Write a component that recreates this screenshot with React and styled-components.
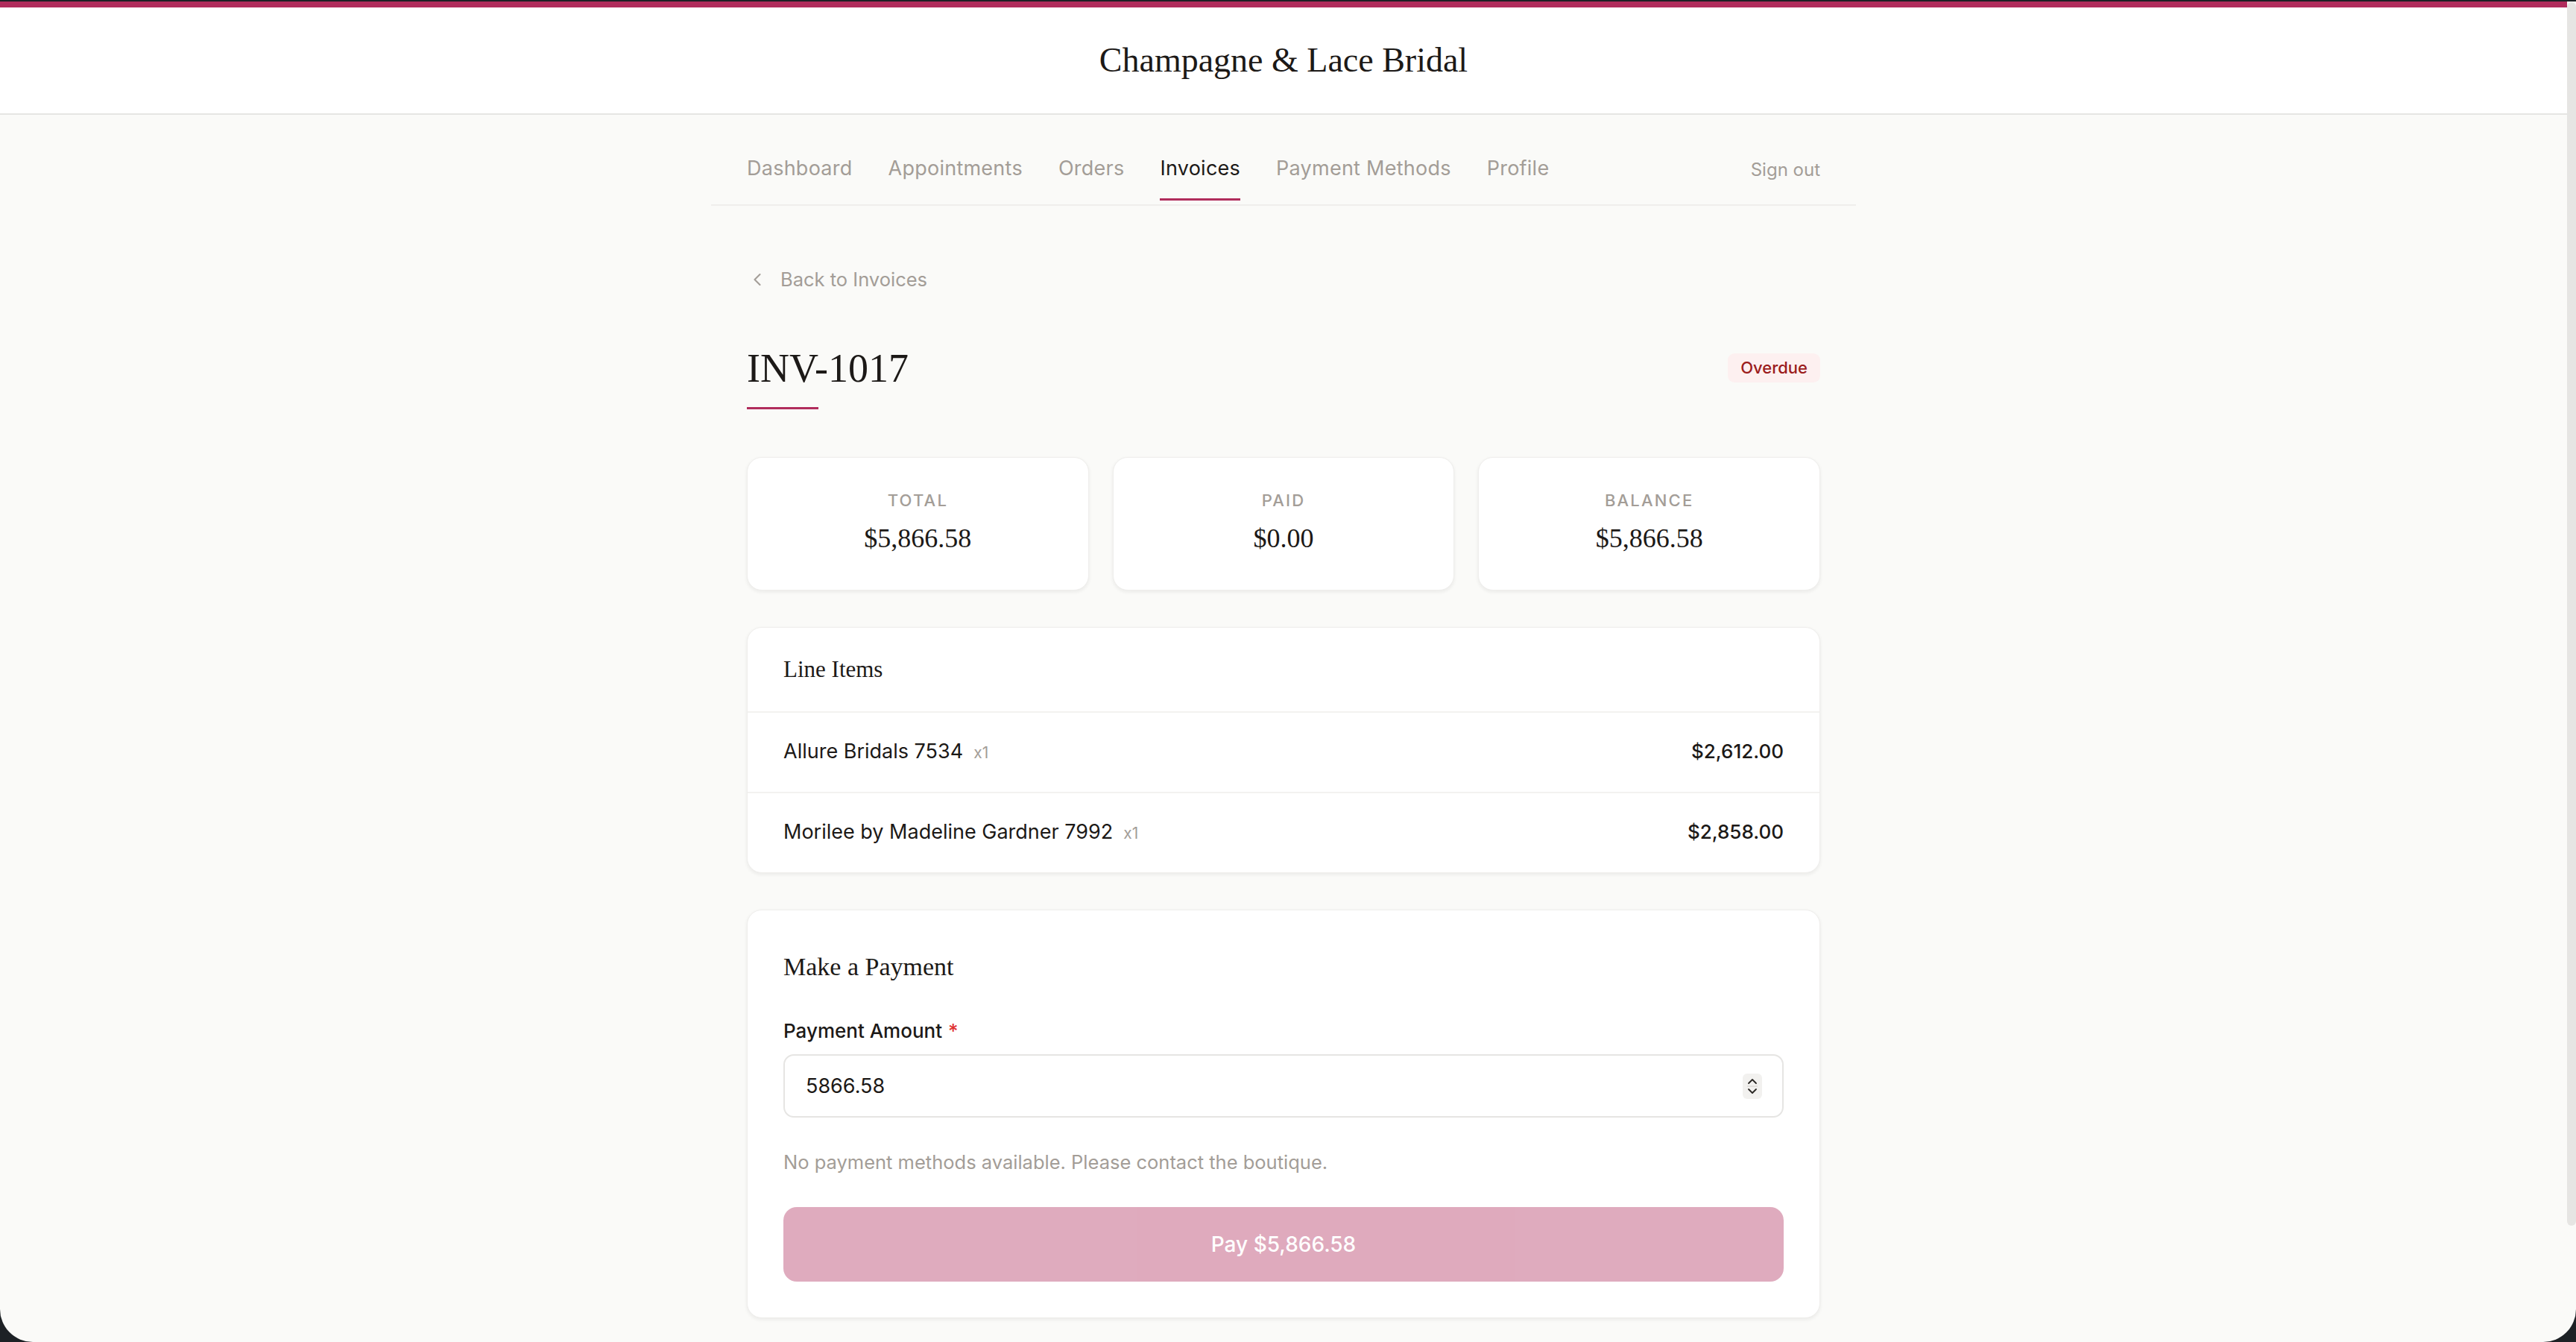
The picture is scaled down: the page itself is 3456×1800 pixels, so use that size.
import styled, { createGlobalStyle } from 'styled-components';
import { ChevronLeft } from 'lucide-react';

const GlobalStyle = createGlobalStyle`
  html, body {
    margin: 0;
    padding: 0;
    background: #1d2125;
    overflow: hidden;
  }
  * { box-sizing: border-box; }
`;

const serif = `"Liberation Serif", "Times New Roman", serif`;
const sans = `Inter, "Liberation Sans", Arial, sans-serif`;
const crimson = '#b02c5c';
const muted = '#a39d97';

const Window = styled.div`
  margin-top: 2px;
  height: 1798px;
  background: #fafaf8;
  border-radius: 0 0 44px 44px;
  overflow: hidden;
  display: flex;
  font-family: ${sans};
  color: #1c1917;
`;

const Page = styled.div`
  flex: 1;
  min-width: 0;
  overflow: hidden;
`;

const ScrollRail = styled.div`
  width: 12px;
  flex-shrink: 0;
  padding-top: 1px;
`;

const ScrollThumb = styled.div`
  height: 1641px;
  border-radius: 6px;
  background: #e6e5e3;
`;

const Header = styled.header`
  height: 152px;
  background: #fff;
  border-top: 8px solid ${crimson};
  border-bottom: 2px solid #e6e5e3;
  display: flex;
  align-items: center;
  justify-content: center;
`;

const Brand = styled.h1`
  margin: 0;
  font-family: ${serif};
  font-weight: 400;
  font-size: 46px;
  line-height: 56px;
  color: #1c1917;
`;

const Nav = styled.nav`
  max-width: 1536px;
  margin: 0 auto;
  padding: 0 48px 5px;
  border-bottom: 2px solid #efeeec;
  display: flex;
  justify-content: space-between;
  align-items: flex-start;
`;

const NavLinks = styled.div`
  display: flex;
  gap: 48px;
`;

const NavLink = styled.a`
  padding: 52px 0 20px;
  font-size: 27px;
  line-height: 40px;
  letter-spacing: 0.25px;
  color: ${p => (p.$active ? '#1c1917' : muted)};
  border-bottom: 3px solid ${p => (p.$active ? crimson : 'transparent')};
  text-decoration: none;
  cursor: pointer;
`;

const SignOut = styled.button`
  padding: 54px 0 0;
  border: 0;
  background: none;
  font-family: ${sans};
  font-size: 24px;
  line-height: 40px;
  color: ${muted};
  cursor: pointer;
`;

const Main = styled.main`
  max-width: 1536px;
  margin: 0 auto;
  padding: 79px 48px 200px;
`;

const BackLink = styled.a`
  display: flex;
  align-items: center;
  gap: 17px;
  font-size: 25.5px;
  line-height: 40px;
  color: ${muted};
  cursor: pointer;
`;

const TitleRow = styled.div`
  margin: 67px 0 64px;
  display: flex;
  justify-content: space-between;
  align-items: flex-start;
`;

const Title = styled.h2`
  margin: 0;
  font-family: ${serif};
  font-weight: 400;
  font-size: 54px;
  line-height: 64px;
  color: #1c1917;

  &::after {
    content: '';
    display: block;
    width: 96px;
    height: 3px;
    margin-top: 20px;
    background: ${crimson};
  }
`;

const Badge = styled.span`
  margin-top: 12px;
  height: 39px;
  padding: 0 17px;
  border-radius: 9px;
  background: #fdf0f0;
  color: #9b1c1c;
  font-size: 22px;
  font-weight: 500;
  line-height: 39px;
`;

const Card = styled.section`
  background: #fff;
  border: 1px solid #efeeec;
  border-radius: 20px;
  box-shadow: 0 2px 5px rgba(28, 25, 23, 0.07);
  margin-bottom: ${p => p.$gap || '49px'};
`;

const StatGrid = styled.div`
  display: grid;
  grid-template-columns: repeat(3, 1fr);
  gap: 32px;
  margin-bottom: 49px;
`;

const StatCard = styled(Card)`
  margin: 0;
  padding: 41px 32px 45px;
  text-align: center;
`;

const StatLabel = styled.div`
  font-size: 22px;
  line-height: 32px;
  font-weight: 500;
  letter-spacing: 0.1em;
  color: ${muted};
`;

const StatValue = styled.div`
  margin-top: 11px;
  font-family: ${serif};
  font-size: 36px;
  line-height: 48px;
`;

const CardHeader = styled.div`
  padding: 40px 48px;
  border-bottom: 2px solid #f3f2f0;
  font-family: ${serif};
  font-size: 31px;
  line-height: 32px;
`;

const ItemRow = styled.div`
  display: flex;
  justify-content: space-between;
  align-items: baseline;
  padding: 32px 48px;
  font-size: 27px;
  line-height: 40px;
  &:not(:last-child) { border-bottom: 2px solid #f3f2f0; }
`;

const ItemName = styled.span`
  display: flex;
  align-items: baseline;
  gap: 14px;
`;

const Qty = styled.span`
  font-size: 21px;
  color: ${muted};
`;

const Price = styled.span`
  font-size: 26px;
  font-weight: 500;
`;

const PaymentCard = styled(Card)`
  padding: 48px;
`;

const PaymentTitle = styled.h3`
  margin: 0;
  font-family: ${serif};
  font-weight: 400;
  font-size: 34px;
  line-height: 56px;
`;

const Label = styled.label`
  display: block;
  margin-top: 40px;
  margin-bottom: 13px;
  font-size: 26px;
  line-height: 36px;
  font-weight: 500;

  & span { color: #e03131; margin-left: 8px; }
`;

const InputBox = styled.div`
  height: 85px;
  border: 2px solid #e6e5e3;
  border-radius: 14px;
  padding: 0 27px 0 28px;
  display: flex;
  align-items: center;
  background: #fff;
`;

const Input = styled.input`
  flex: 1;
  border: 0;
  outline: none;
  background: transparent;
  padding: 0;
  font-family: ${sans};
  font-size: 27px;
  color: #1c1917;
`;

const Help = styled.p`
  margin: 40px 0;
  font-size: 25.5px;
  line-height: 40px;
  color: ${muted};
`;

const PayButton = styled.button`
  width: 100%;
  height: 100px;
  border: 0;
  border-radius: 18px;
  background: ${crimson};
  opacity: 0.4;
  color: #fff;
  font-family: ${sans};
  font-size: 28px;
  font-weight: 500;
  cursor: not-allowed;
`;

const Stepper = () => (
  <svg width="26" height="34" viewBox="0 0 26 34" fill="none">
    <rect width="26" height="34" rx="6" fill="#f2f1ef" />
    <path d="M8 13l5-5 5 5" stroke="#2b2825" strokeWidth="1.8" strokeLinecap="round" strokeLinejoin="round" />
    <path d="M6 17h14" stroke="#dcdad7" strokeWidth="1.5" />
    <path d="M8 21l5 5 5-5" stroke="#2b2825" strokeWidth="1.8" strokeLinecap="round" strokeLinejoin="round" />
  </svg>
);

const links = ['Dashboard', 'Appointments', 'Orders', 'Invoices', 'Payment Methods', 'Profile'];

const stats = [
  { label: 'TOTAL', value: '$5,866.58' },
  { label: 'PAID', value: '$0.00' },
  { label: 'BALANCE', value: '$5,866.58' },
];

const items = [
  { name: 'Allure Bridals 7534', qty: 1, price: '$2,612.00' },
  { name: 'Morilee by Madeline Gardner 7992', qty: 1, price: '$2,858.00' },
];

export default function App() {
  return (
    <>
      <GlobalStyle />
      <Window>
        <Page>
          <Header>
            <Brand>Champagne &amp; Lace Bridal</Brand>
          </Header>
          <Nav>
            <NavLinks>
              {links.map(l => (
                <NavLink key={l} $active={l === 'Invoices'}>{l}</NavLink>
              ))}
            </NavLinks>
            <SignOut>Sign out</SignOut>
          </Nav>
          <Main>
            <BackLink>
              <ChevronLeft size={28} strokeWidth={1.75} />
              Back to Invoices
            </BackLink>
            <TitleRow>
              <Title>INV-1017</Title>
              <Badge>Overdue</Badge>
            </TitleRow>
            <StatGrid>
              {stats.map(s => (
                <StatCard key={s.label}>
                  <StatLabel>{s.label}</StatLabel>
                  <StatValue>{s.value}</StatValue>
                </StatCard>
              ))}
            </StatGrid>
            <Card>
              <CardHeader>Line Items</CardHeader>
              {items.map(it => (
                <ItemRow key={it.name}>
                  <ItemName>
                    {it.name}
                    <Qty>x{it.qty}</Qty>
                  </ItemName>
                  <Price>{it.price}</Price>
                </ItemRow>
              ))}
            </Card>
            <PaymentCard $gap="0">
              <PaymentTitle>Make a Payment</PaymentTitle>
              <Label>Payment Amount<span>*</span></Label>
              <InputBox>
                <Input type="text" defaultValue="5866.58" />
                <Stepper />
              </InputBox>
              <Help>No payment methods available. Please contact the boutique.</Help>
              <PayButton disabled>Pay $5,866.58</PayButton>
            </PaymentCard>
          </Main>
        </Page>
        <ScrollRail>
          <ScrollThumb />
        </ScrollRail>
      </Window>
    </>
  );
}
